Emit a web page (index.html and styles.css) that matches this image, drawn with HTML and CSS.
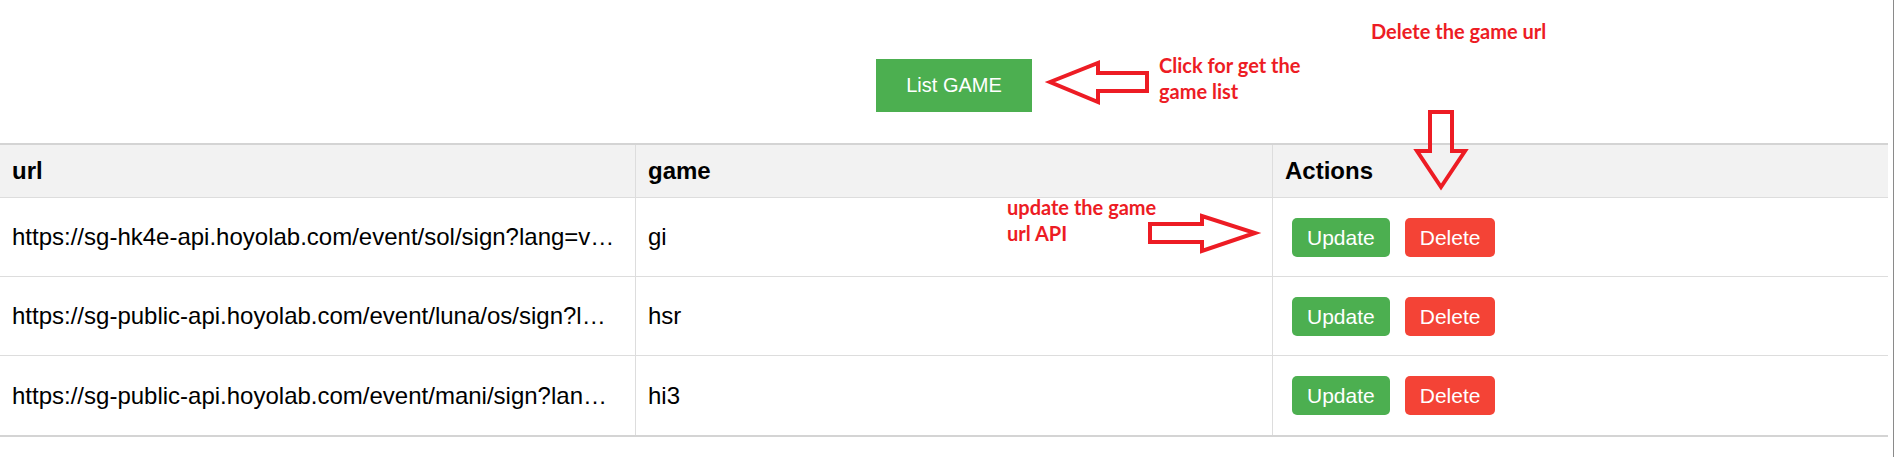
FILE: index.html
```html
<!DOCTYPE html>
<html lang="en">
<head>
<meta charset="utf-8">
<title>Game URLs</title>
<link rel="stylesheet" href="styles.css">
</head>
<body>
  <main class="page">
    <div class="toolbar">
      <button class="btn-list">List GAME</button>
    </div>
    <table class="games">
      <colgroup>
        <col class="col-url">
        <col class="col-game">
        <col class="col-actions">
      </colgroup>
      <thead>
        <tr><th>url</th><th>game</th><th>Actions</th></tr>
      </thead>
      <tbody>
        <tr>
          <td class="url">https://sg-hk4e-api.hoyolab.com/event/sol/sign?lang=vi-vn&amp;act_id=e202102251931481</td>
          <td>gi</td>
          <td class="actions"><div class="btns"><button class="btn btn-update">Update</button><button class="btn btn-delete">Delete</button></div></td>
        </tr>
        <tr>
          <td class="url">https://sg-public-api.hoyolab.com/event/luna/os/sign?lang=vi-vn&amp;act_id=e202303301540311</td>
          <td>hsr</td>
          <td class="actions"><div class="btns"><button class="btn btn-update">Update</button><button class="btn btn-delete">Delete</button></div></td>
        </tr>
        <tr>
          <td class="url">https://sg-public-api.hoyolab.com/event/mani/sign?lang=vi-vn&amp;act_id=e202110291205111</td>
          <td>hi3</td>
          <td class="actions"><div class="btns"><button class="btn btn-update">Update</button><button class="btn btn-delete">Delete</button></div></td>
        </tr>
      </tbody>
    </table>
  </main>

  <div class="note note-delete">Delete the game url</div>
  <div class="note note-list">Click for get the<br>game list</div>
  <div class="note note-update">update the game<br>url API</div>

  <svg class="arrows" width="1894" height="457" viewBox="0 0 1894 457" aria-hidden="true">
    <polygon points="1050,82 1098,63 1098,73 1147,73 1147,91 1098,91 1098,102"/>
    <polygon points="1150,224 1202,224 1202,216 1255,233 1202,251 1202,242 1150,242"/>
    <polygon points="1430,112 1452,112 1452,151 1465,151 1441,187 1417,151 1430,151"/>
  </svg>
</body>
</html>
```

FILE: styles.css
```css
* { box-sizing: border-box; }

html, body {
  margin: 0;
  padding: 0;
}

body {
  position: relative;
  width: 1894px;
  min-height: 457px;
  border-right: 1px solid #8a8a8a;
  background: #fff;
  font-family: "Liberation Sans", Arial, sans-serif;
  color: #000;
}

.page {
  display: flex;
  flex-direction: column;
  padding-top: 59px;
}

.toolbar {
  display: flex;
  padding-left: 876px;
  margin-bottom: 31px;
}

.btn-list {
  font-family: "Liberation Sans", Arial, sans-serif;
  font-size: 20px;
  line-height: 23px;
  padding: 15px 30px;
  width: 156px;
  height: 53px;
  border: none;
  border-radius: 0;
  background: #4caf50;
  color: #fff;
}

.games {
  width: 1888px;
  table-layout: fixed;
  border-collapse: separate;
  border-spacing: 0;
  border-top: 2px solid #d4d4d4;
  border-bottom: 2px solid #d4d4d4;
  font-size: 24px;
}

.col-url { width: 636px; }
.col-game { width: 637px; }
.col-actions { width: 615px; }

.games th,
.games td {
  padding: 0 12px;
  text-align: left;
  vertical-align: middle;
  border-bottom: 1px solid #dddddd;
  border-right: 1px solid #dddddd;
}

.games th:last-child,
.games td:last-child {
  border-right: none;
}

.games th {
  height: 53px;
  background: #f2f2f2;
  font-weight: bold;
}

.games td {
  height: 79px;
}

.games tbody tr:last-child td {
  border-bottom: none;
}

.games td.url {
  padding-right: 17px;
  white-space: nowrap;
  overflow: hidden;
  text-overflow: ellipsis;
}

.games td.actions {
  padding-left: 19px;
}

.btns {
  display: flex;
  gap: 15px;
  align-items: center;
}

.btn {
  font-family: "Liberation Sans", Arial, sans-serif;
  font-size: 21px;
  line-height: 25px;
  padding: 7px 15px;
  border: none;
  border-radius: 5px;
  color: #fff;
}

.btn-update { background: #4caf50; }
.btn-delete { background: #f44336; }

.note {
  position: absolute;
  font-family: Lato, "Open Sans", sans-serif;
  font-weight: 700;
  font-size: 20px;
  line-height: 25.5px;
  color: #ed1c24;
  white-space: nowrap;
}

.note-delete { left: 1371px; top: 19px; }
.note-list { left: 1159px; top: 53px; }
.note-update { left: 1007px; top: 195px; }

.arrows {
  position: absolute;
  left: 0;
  top: 0;
  pointer-events: none;
}

.arrows polygon {
  fill: none;
  stroke: #ed1c24;
  stroke-width: 4;
  stroke-linejoin: miter;
  stroke-miterlimit: 10;
}
```
